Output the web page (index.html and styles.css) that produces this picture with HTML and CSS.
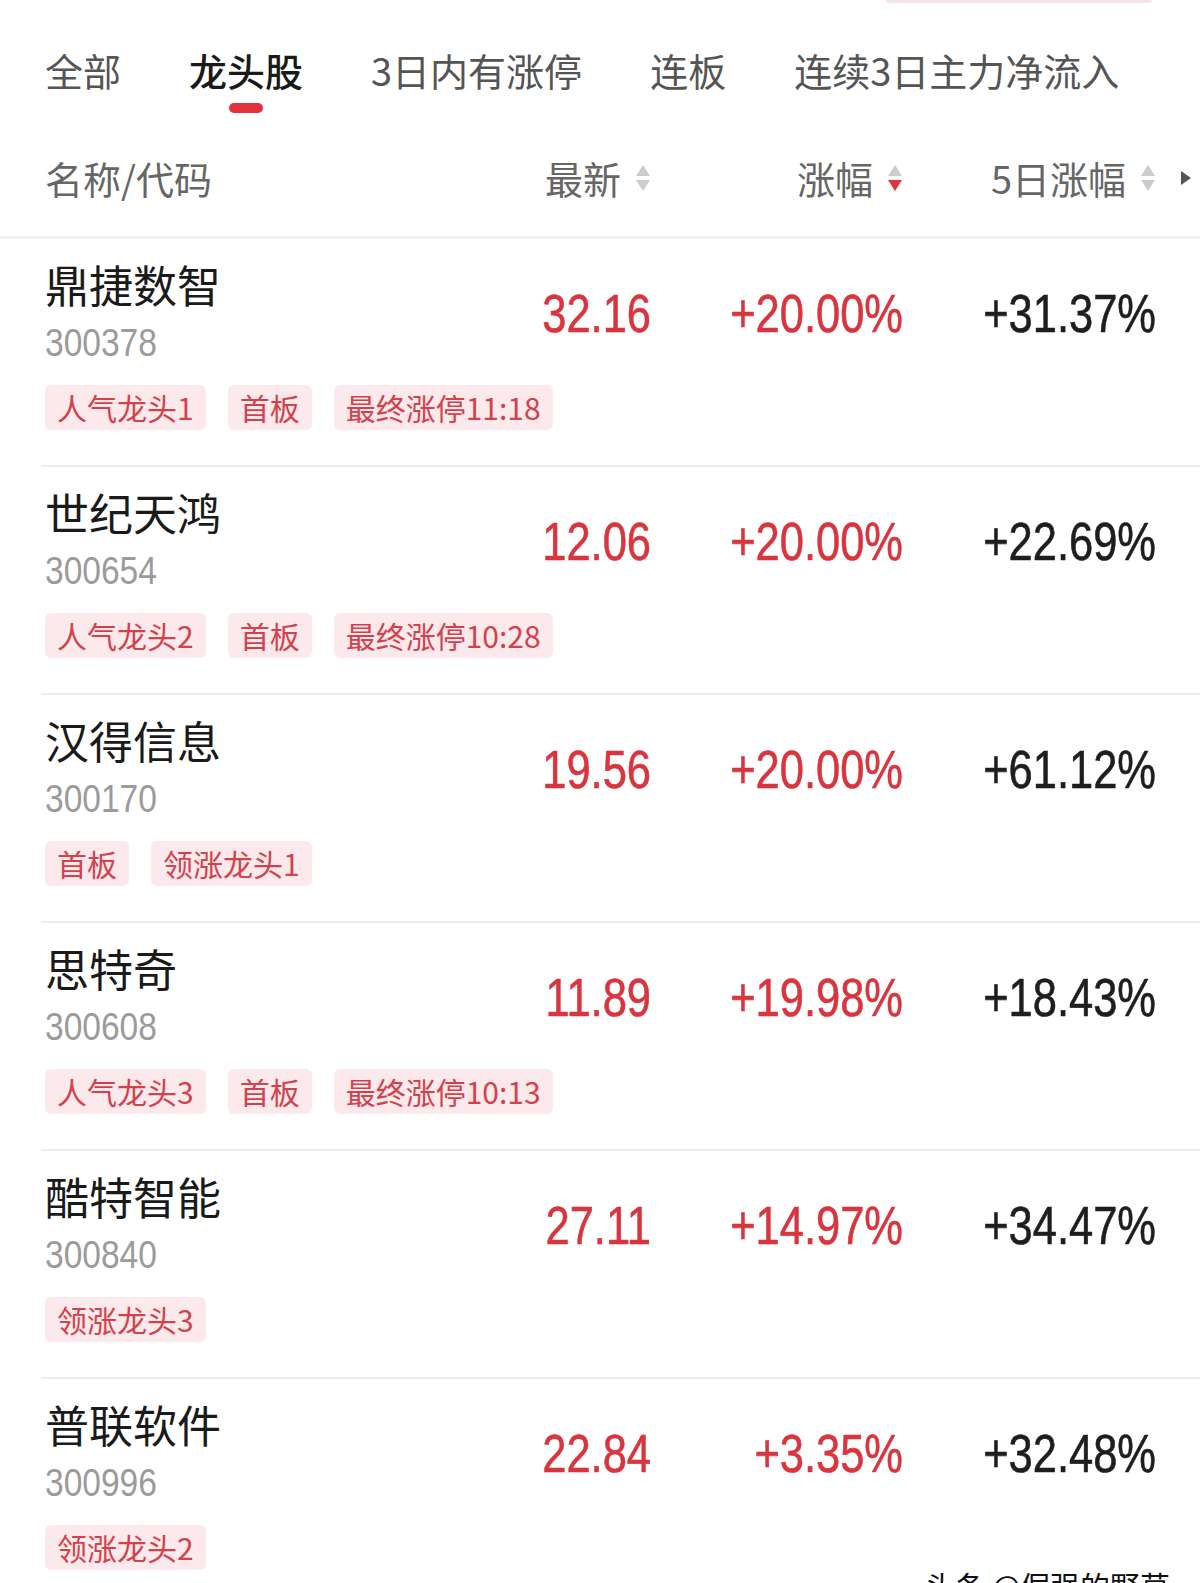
FILE: index.html
```html
<!DOCTYPE html>
<html lang="zh-CN">
  <head>
    <meta charset="UTF-8" />
    <meta name="viewport" content="width=device-width, initial-scale=1.0" />
    <title>龙头股</title>
    <link rel="stylesheet" href="styles.css">
  </head>
  <body>
    <div class="page">
      <div class="top-strip"></div>
      <!-- Tabs -->
      <nav class="tabs">
        <a href="#" class="tab">全部</a>
        <a href="#" class="tab active">龙头股</a>
        <a href="#" class="tab">3日内有涨停</a>
        <a href="#" class="tab">连板</a>
        <a href="#" class="tab">连续3日主力净流入</a>
      </nav>
      <!-- List header -->
      <div class="list-head">
        <div class="head-name">名称/代码</div>
        <div class="head-sort">
          最新
          <svg class="sort-icon" viewBox="0 0 16 30" width="16" height="30">
            <polygon points="8,2 15,13 1,13" fill="#cccccc" />
            <polygon points="1,17 15,17 8,28" fill="#cccccc" />
          </svg>
        </div>
        <div class="head-sort">
          涨幅
          <svg class="sort-icon" viewBox="0 0 16 30" width="16" height="30">
            <polygon points="8,2 15,13 1,13" fill="#cccccc" />
            <polygon points="1,17 15,17 8,28" fill="#e2323e" />
          </svg>
        </div>
        <div class="head-sort">
          5日涨幅
          <svg class="sort-icon" viewBox="0 0 16 30" width="16" height="30">
            <polygon points="8,2 15,13 1,13" fill="#cccccc" />
            <polygon points="1,17 15,17 8,28" fill="#cccccc" />
          </svg>
        </div>
        <div class="head-more">
          <svg viewBox="0 0 10 14" width="10" height="14">
            <polygon points="0,0 10,7 0,14" fill="#555" />
          </svg>
        </div>
      </div>
      <!-- Stocks -->
      <ul class="stock-list">
        <li class="stock">
          <div class="stock-info">
            <div class="stock-name">鼎捷数智</div>
            <div class="stock-code">300378</div>
          </div>
          <div class="num up">32.16</div>
          <div class="num up">+20.00%</div>
          <div class="num">+31.37%</div>
          <div class="tags">
            <span class="tag">人气龙头1</span>
            <span class="tag">首板</span>
            <span class="tag">最终涨停11:18</span>
          </div>
        </li>
        <li class="stock">
          <div class="stock-info">
            <div class="stock-name">世纪天鸿</div>
            <div class="stock-code">300654</div>
          </div>
          <div class="num up">12.06</div>
          <div class="num up">+20.00%</div>
          <div class="num">+22.69%</div>
          <div class="tags">
            <span class="tag">人气龙头2</span>
            <span class="tag">首板</span>
            <span class="tag">最终涨停10:28</span>
          </div>
        </li>
        <li class="stock">
          <div class="stock-info">
            <div class="stock-name">汉得信息</div>
            <div class="stock-code">300170</div>
          </div>
          <div class="num up">19.56</div>
          <div class="num up">+20.00%</div>
          <div class="num">+61.12%</div>
          <div class="tags">
            <span class="tag">首板</span>
            <span class="tag">领涨龙头1</span>
          </div>
        </li>
        <li class="stock">
          <div class="stock-info">
            <div class="stock-name">思特奇</div>
            <div class="stock-code">300608</div>
          </div>
          <div class="num up">11.89</div>
          <div class="num up">+19.98%</div>
          <div class="num">+18.43%</div>
          <div class="tags">
            <span class="tag">人气龙头3</span>
            <span class="tag">首板</span>
            <span class="tag">最终涨停10:13</span>
          </div>
        </li>
        <li class="stock">
          <div class="stock-info">
            <div class="stock-name">酷特智能</div>
            <div class="stock-code">300840</div>
          </div>
          <div class="num up">27.11</div>
          <div class="num up">+14.97%</div>
          <div class="num">+34.47%</div>
          <div class="tags">
            <span class="tag">领涨龙头3</span>
          </div>
        </li>
        <li class="stock">
          <div class="stock-info">
            <div class="stock-name">普联软件</div>
            <div class="stock-code">300996</div>
          </div>
          <div class="num up">22.84</div>
          <div class="num up">+3.35%</div>
          <div class="num">+32.48%</div>
          <div class="tags">
            <span class="tag">领涨龙头2</span>
          </div>
        </li>
      </ul>
      <div class="watermark">头条 @倔强的野草</div>
    </div>
  </body>
</html>
```

FILE: styles.css
```css
* {
  margin: 0;
  padding: 0;
  box-sizing: border-box;
}
body {
  font-family: "Noto Sans CJK SC", "Noto Sans", sans-serif;
  background-color: #fff;
  color: #222;
}
.page {
  position: relative;
  width: 1200px;
  height: 1583px;
  overflow: hidden;
}
.top-strip {
  margin-left: 886px;
  width: 266px;
  height: 3px;
  background-color: #f7e4e7;
  border-radius: 0 0 4px 4px;
}
/* Tabs */
.tabs {
  display: flex;
  align-items: flex-start;
  gap: 68px;
  padding: 42px 0 0 45px;
}
.tab {
  display: flex;
  flex-direction: column;
  align-items: center;
  font-size: 38px;
  line-height: 50px;
  color: #555;
  text-decoration: none;
}
.tab.active {
  color: #1a1a1a;
  font-weight: 500;
}
.tab.active::after {
  content: "";
  width: 34px;
  height: 10px;
  margin-top: 8px;
  border-radius: 5px;
  background-color: #e2323e;
}
/* List header */
.list-head {
  display: grid;
  grid-template-columns: 1fr 200px 252px 253px 44px;
  align-items: center;
  padding: 40px 0 33px 45px;
  border-bottom: 3px solid #f0f0f0;
  font-size: 38px;
  line-height: 50px;
  color: #666;
}
.head-sort {
  display: flex;
  justify-content: flex-end;
  align-items: center;
  gap: 14px;
}
.head-more {
  display: flex;
  align-items: center;
  padding-left: 25px;
}
/* Stock rows */
.stock-list {
  list-style: none;
}
.stock {
  display: grid;
  grid-template-columns: 1fr 200px 252px 253px 44px;
  margin-left: 41px;
  padding: 17px 0 35px 4px;
  border-bottom: 2px solid #ededed;
}
.stock-name {
  font-size: 44px;
  line-height: 56px;
  color: #1a1a1a;
}
.stock-code {
  margin-top: 7px;
  font-family: "Liberation Sans", sans-serif;
  font-size: 39px;
  line-height: 48px;
  color: #9b9b9b;
  transform: scaleX(0.86);
  transform-origin: left center;
}
.num {
  align-self: center;
  margin-top: 4px;
  text-align: right;
  font-family: "Liberation Sans", sans-serif;
  font-size: 53px;
  line-height: 60px;
  color: #1e1e1e;
  -webkit-text-stroke: 0.6px currentColor;
  transform: scaleX(0.82);
  transform-origin: right center;
}
.num.up {
  color: #d9353f;
}
.tags {
  grid-column: 1 / -1;
  display: flex;
  gap: 22px;
  margin-top: 18px;
}
.tag {
  padding: 0 12px;
  height: 45px;
  line-height: 45px;
  font-size: 30px;
  color: #d2414c;
  background-color: #fce9eb;
  border-radius: 6px;
}
.watermark {
  position: absolute;
  left: 925px;
  top: 1568px;
  font-size: 30px;
  line-height: 34px;
  color: #111;
  text-shadow: 0 0 2px #fff, 0 0 2px #fff;
}
```
